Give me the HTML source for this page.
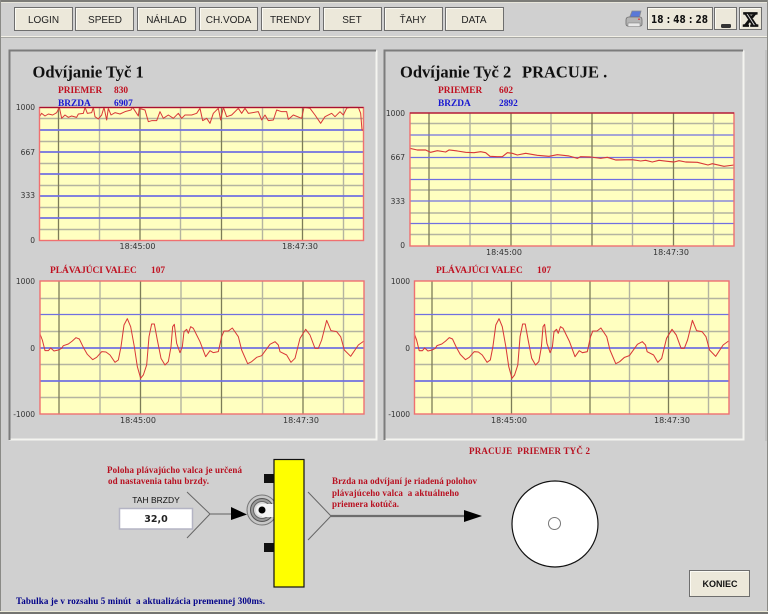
<!DOCTYPE html>
<html><head><meta charset="utf-8"><style>
html,body{margin:0;padding:0;background:#d0d0d0;width:768px;height:614px;overflow:hidden}
svg{display:block;filter:blur(.35px)}
text{white-space:pre}
.b{font:10px "Liberation Sans",sans-serif;fill:#222;text-anchor:middle}
.a{font:7.5px "DejaVu Sans",sans-serif;fill:#333;text-anchor:end}
.t{font:8px "DejaVu Sans",sans-serif;fill:#333;text-anchor:middle}
.h{font:bold 16.5px "Liberation Serif",serif;fill:#111}
.r{font:bold 9.4px "Liberation Serif",serif;fill:#c01020}
.u{font:bold 9.4px "Liberation Serif",serif;fill:#1818d0}
.n{font:bold 9px "Liberation Serif",serif;fill:#b81020}
.y{fill:#ffffc0}
.gl{stroke:#b4b4a0;stroke-width:1.400;fill:none}
.gd{stroke:#7c7c58;stroke-width:1.300;fill:none}
.bl{stroke:#7070e0;stroke-width:1.200;fill:none}
.bk{stroke:#7070e0;stroke-width:1.800;fill:none}
.tr{fill:none;stroke:#d83838;stroke-linejoin:round}
.fr{fill:none;stroke:#f07070;stroke-width:1.400}
.btn{fill:#ece8da;stroke:#6e6e6e;stroke-width:1}
.hi{fill:none;stroke:#fbfaf3;stroke-width:1}
</style></head><body>
<svg width="768" height="614" viewBox="0 0 768 614" xmlns="http://www.w3.org/2000/svg">
<rect width="768" height="614" fill="#d0d0d0"/>
<!-- window frame -->
<rect x="0" y="0" width="768" height="2" fill="#7c7c78"/>
<rect x="0" y="2" width="768" height="1" fill="#e8e6dc"/>
<rect x="0" y="36" width="768" height="1" fill="#f2f0e6"/>
<rect x="0" y="37" width="768" height="1" fill="#a8a8a4"/>
<rect x="0" y="0" width="1" height="614" fill="#8a8a86"/>
<rect x="767" y="0" width="1" height="614" fill="#8a8a86"/>
<rect x="0" y="611" width="768" height="1" fill="#ecead8"/>
<rect x="0" y="612" width="768" height="2" fill="#747470"/>

<!-- buttons -->
<g>
<rect class="btn" x="14.500" y="7.500" width="58" height="23"/><path class="hi" d="M15.500 29.500V8.500H71.500"/><text class="b" x="43.500" y="23">LOGIN</text>
<rect class="btn" x="75.500" y="7.500" width="58" height="23"/><path class="hi" d="M76.500 29.500V8.500H132.500"/><text class="b" x="105" y="23">SPEED</text>
<rect class="btn" x="137.500" y="7.500" width="58" height="23"/><path class="hi" d="M138.500 29.500V8.500H194.500"/><text class="b" x="166.500" y="23">NÁHLAD</text>
<rect class="btn" x="199.500" y="7.500" width="58" height="23"/><path class="hi" d="M200.500 29.500V8.500H256.500"/><text class="b" x="228.500" y="23">CH.VODA</text>
<rect class="btn" x="261.500" y="7.500" width="58" height="23"/><path class="hi" d="M262.500 29.500V8.500H318.500"/><text class="b" x="290.500" y="23">TRENDY</text>
<rect class="btn" x="323.500" y="7.500" width="58" height="23"/><path class="hi" d="M324.500 29.500V8.500H380.500"/><text class="b" x="352" y="23">SET</text>
<rect class="btn" x="384.500" y="7.500" width="58" height="23"/><path class="hi" d="M385.500 29.500V8.500H441.500"/><text class="b" x="413" y="23">ŤAHY</text>
<rect class="btn" x="445.500" y="7.500" width="58" height="23"/><path class="hi" d="M446.500 29.500V8.500H502.500"/><text class="b" x="474" y="23">DATA</text>
</g>

<!-- printer -->
<g>
<path d="M629 19 L632 11 H641 L639 19Z" fill="#5a78d8" stroke="#8a8a8a" stroke-width=".8"/>
<path d="M626 20 Q626 17 629 17 H640 Q642 17 642 20 V24 Q642 26 640 26 H628 Q626 26 626 24Z" fill="#b4b4b4" stroke="#6e6e6e" stroke-width=".8"/>
<rect x="628" y="23" width="12" height="3.500" fill="#e8e8e8" stroke="#777" stroke-width=".5"/>
<rect x="638" y="18.500" width="2" height="1.500" fill="#d85050"/>
</g>

<!-- clock, min, close -->
<rect class="btn" x="647.500" y="7.500" width="65" height="22"/><path class="hi" d="M648.500 28.500V8.500H711.500"/>
<text x="651" y="23" textLength="57" lengthAdjust="spacingAndGlyphs" style="font:bold 10.500px 'DejaVu Sans',sans-serif;fill:#111">18 : 48 : 28</text>
<rect class="btn" x="714.500" y="7.500" width="22" height="22"/><path class="hi" d="M715.500 28.500V8.500H735.500"/>
<rect x="721" y="24" width="10" height="4" rx="1.200" fill="#333"/>
<rect class="btn" x="739.500" y="7.500" width="22" height="22"/><path class="hi" d="M740.500 28.500V8.500H760.500"/>
<text x="750.500" y="26" text-anchor="middle" style="font:bold 20px 'Liberation Serif',serif;fill:#d8d8d8;stroke:#111;stroke-width:1.800px">X</text>

<!-- panels -->
<path d="M376.500 50.500V439.500H9.500" fill="none" stroke="#f4f4f0" stroke-width="2"/>
<path d="M9.500 440V50.500H376" fill="none" stroke="#7c7c7c" stroke-width="2"/>
<path d="M743.500 50.500V439.500H384.500" fill="none" stroke="#f4f4f0" stroke-width="2"/>
<path d="M384.500 440V50.500H743" fill="none" stroke="#7c7c7c" stroke-width="2"/>
<rect x="765.500" y="50" width="1" height="391" fill="#9c9c9c" opacity=".5"/>

<text class="h" x="32.500" y="77.500">Odvíjanie Tyč 1</text>
<text class="r" x="58" y="93">PRIEMER</text><text class="r" x="114" y="93">830</text>
<text class="u" x="58" y="106">BRZDA</text><text class="u" x="114" y="106">6907</text>
<text class="h" x="400" y="77.500">Odvíjanie Tyč 2</text><text class="h" x="522" y="77.500">PRACUJE .</text>
<text class="r" x="438" y="93">PRIEMER</text><text class="r" x="499" y="93">602</text>
<text class="u" x="438" y="106">BRZDA</text><text class="u" x="499" y="106">2892</text>

<!-- chart 1 top -->
<rect class="y" x="39.500" y="107.500" width="324" height="133"/>
<path class="gl" d="M40 118.500H364M40 141.500H364M40 163.500H364M40 185.500H364M40 207.500H364M40 229.500H364M99.500 107V240M180.500 107V240M262.500 107V240M343.500 107V240"/>
<path class="gd" d="M58.500 107V240M140 107V240M221.500 107V240M302.500 107V240"/>
<path class="bk" d="M40 130H364M40 152H364M40 174H364M40 196H364M40 218H364"/>
<polyline class="tr" transform="translate(0,100) scale(.33333)" style="stroke-width:3" points="118,50 125,40 135,48 145,42 158,45 170,38 178,22 185,55 195,45 205,52 215,48 230,52 235,42 250,40 255,22 262,40 275,38 280,22 285,50 295,57 305,45 312,22 320,60 325,25 333,45 345,38 360,42 375,35 393,30 398,22 415,48 418,25 435,30 445,65 455,62 470,62 480,35 490,55 505,45 520,55 535,40 545,55 555,45 575,45 590,40 600,25 608,62 620,55 630,70 640,40 655,25 662,60 670,22 680,50 695,45 715,25 725,40 735,25 745,40 775,35 785,60 795,45 805,62 820,60 830,30 845,35 860,35 865,58 880,45 905,55 912,22 930,25 945,45 962,70 975,50 995,40 1005,50 1020,35 1030,45 1040,25 1050,22 1075,22 1082,40 1086,90 1092,92"/>
<rect class="fr" x="39.500" y="107.500" width="324" height="133"/>
<path d="M39.500 107.500H363.500" stroke="#a81030" stroke-width="1.200" fill="none"/>
<text class="a" x="35" y="110">1000</text><text class="a" x="35" y="155">667</text><text class="a" x="35" y="198">333</text><text class="a" x="35" y="243">0</text>
<text class="t" x="137.500" y="249">18:45:00</text><text class="t" x="300" y="249">18:47:30</text>

<!-- chart 1 bottom -->
<text class="r" x="50" y="273">PLÁVAJÚCI VALEC</text><text class="r" x="151" y="273">107</text>
<rect class="y" x="40" y="281" width="324" height="133"/>
<path class="gl" d="M40 298.500H364M40 331.500H364M40 364.500H364M40 397.500H364M100 281V414M181 281V414M262.500 281V414M343.500 281V414"/>
<path class="gd" d="M59 281V414M140.500 281V414M221.500 281V414M303 281V414"/>
<path class="bl" d="M40 314.500H364"/><path class="bk" d="M40 348H364M40 381H364"/>
<polyline class="tr" transform="translate(0,260) scale(.33333)" style="stroke-width:3" points="120,222 127,240 135,272 145,272 152,264 162,273 175,270 185,265 190,257 205,252 217,243 228,233 238,237 250,262 262,283 278,299 290,292 305,275 318,276 330,285 345,307 355,300 363,260 372,195 382,176 392,200 403,260 412,320 422,355 430,345 440,315 447,230 455,192 463,192 472,240 483,295 495,315 505,305 513,260 518,200 523,193 530,250 540,278 547,260 552,215 560,208 565,220 572,200 580,205 590,225 600,245 617,290 630,272 640,278 655,275 665,230 672,213 685,213 697,204 715,230 725,270 743,311 755,305 770,292 785,287 810,253 825,245 835,255 840,275 860,285 873,307 885,295 900,235 917,208 930,225 945,265 955,265 965,240 980,181 993,212 1010,215 1022,230 1033,270 1052,289 1075,255 1092,243"/>
<rect class="fr" x="40" y="281" width="324" height="133"/>
<text class="a" x="35" y="284">1000</text><text class="a" x="35" y="351">0</text><text class="a" x="35" y="417">-1000</text>
<text class="t" x="138" y="423">18:45:00</text><text class="t" x="301" y="423">18:47:30</text>

<!-- chart 2 top -->
<rect class="y" x="410" y="113" width="324" height="133"/>
<path class="gl" d="M410 123.500H734M410 146H734M410 168H734M410 190H734M410 213H734M410 234.500H734M470 113V246M551 113V246M632.500 113V246M713.500 113V246"/>
<path class="gd" d="M429 113V246M511 113V246M592 113V246M673.500 113V246"/>
<path class="bl" d="M410 135H734M410 157.500H734M410 179.500H734M410 201H734M410 223.500H734"/>
<polyline class="tr" transform="translate(384,100) scale(.33333)" style="stroke-width:3.400" points="77,145 100,150 125,150 140,157 160,152 185,156 195,150 220,153 245,157 270,158 290,155 305,158 318,169 340,170 355,170 370,158 385,160 400,165 425,160 460,166 495,169 520,164 555,168 580,175 590,170 620,171 650,175 670,172 695,180 745,179 770,183 785,181 805,186 825,181 850,184 870,186 885,182 905,186 940,187 972,195 985,191 1020,199 1050,195"/>
<rect class="fr" x="410" y="113" width="324" height="133"/>
<path d="M410 113H734" stroke="#a81030" stroke-width="1.200" fill="none"/>
<text class="a" x="405" y="116">1000</text><text class="a" x="405" y="160">667</text><text class="a" x="405" y="204">333</text><text class="a" x="405" y="248">0</text>
<text class="t" x="504" y="255">18:45:00</text><text class="t" x="671" y="255">18:47:30</text>

<!-- chart 2 bottom -->
<text class="r" x="436" y="273">PLÁVAJÚCI VALEC</text><text class="r" x="537" y="273">107</text>
<rect class="y" x="414.500" y="281" width="314.500" height="133"/>
<path class="gl" d="M414 298.500H729M414 331.500H729M414 364.500H729M414 397.500H729M472 281V414M551 281V414M629.500 281V414M708.500 281V414"/>
<path class="gd" d="M432 281V414M511.500 281V414M590 281V414M668.500 281V414"/>
<path class="bl" d="M414 314.500H729"/><path class="bk" d="M414 348H729M414 381H729"/>
<polyline class="tr" transform="translate(384,260) scale(.33333) matrix(.97 0 0 1 -25.400 0)" style="stroke-width:3.200" points="120,222 127,240 135,272 145,272 152,264 162,273 175,270 185,265 190,257 205,252 217,243 228,233 238,237 250,262 262,283 278,299 290,292 305,275 318,276 330,285 345,307 355,300 363,260 372,195 382,176 392,200 403,260 412,320 422,355 430,345 440,315 447,230 455,192 463,192 472,240 483,295 495,315 505,305 513,260 518,200 523,193 530,250 540,278 547,260 552,215 560,208 565,220 572,200 580,205 590,225 600,245 617,290 630,272 640,278 655,275 665,230 672,213 685,213 697,204 715,230 725,270 743,311 755,305 770,292 785,287 810,253 825,245 835,255 840,275 860,285 873,307 885,295 900,235 917,208 930,225 945,265 955,265 965,240 980,181 993,212 1010,215 1022,230 1033,270 1052,289 1075,255 1092,243"/>
<rect class="fr" x="414.500" y="281" width="314.500" height="133"/>
<text class="a" x="410" y="284">1000</text><text class="a" x="410" y="351">0</text><text class="a" x="410" y="417">-1000</text>
<text class="t" x="509" y="423">18:45:00</text><text class="t" x="672" y="423">18:47:30</text>

<!-- bottom area -->
<text class="n" x="469" y="454" textLength="121">PRACUJE  PRIEMER TYČ 2</text>
<text class="n" x="107" y="473" textLength="135" lengthAdjust="spacing">Poloha plávajúcho valca je určená</text>
<text class="n" x="108" y="484" textLength="101" lengthAdjust="spacing">od nastavenia tahu brzdy.</text>
<text class="n" x="332" y="484" textLength="145" lengthAdjust="spacing">Brzda na odvíjaní je riadená polohov</text>
<text class="n" x="332" y="496" textLength="127" lengthAdjust="spacing">plávajúceho valca  a aktuálneho</text>
<text class="n" x="332" y="507" textLength="67" lengthAdjust="spacing">priemera kotúča.</text>
<text x="16" y="604" textLength="249" lengthAdjust="spacing" style="font:bold 9px 'Liberation Serif',serif;fill:#000088">Tabulka je v rozsahu 5 minút  a aktualizácia premennej 300ms.</text>

<text x="156" y="503" text-anchor="middle" style="font:8.500px 'Liberation Sans',sans-serif;fill:#111">TAH BRZDY</text>
<rect x="119.500" y="508.500" width="73" height="20.500" fill="#fff" stroke="#b4b4c4" stroke-width="1.500"/>
<text x="156" y="522" text-anchor="middle" style="font:bold 9.500px 'DejaVu Sans',sans-serif;fill:#222">32,0</text>

<path d="M187 492L210 514L187 538" fill="none" stroke="#666" stroke-width="1"/>
<path d="M210 514H232" stroke="#777" stroke-width="1.200"/>
<path d="M231 507L247 514.500L231 520Z" fill="#000"/>

<!-- roller and pillar -->
<circle cx="262" cy="510" r="15" fill="#c8c8c8" stroke="#777" stroke-width="1"/>
<circle cx="262" cy="510" r="11.500" fill="#9a9a9a" stroke="#555" stroke-width="1"/>
<circle cx="262" cy="510" r="8.500" fill="#dcdcdc" stroke="#666" stroke-width="1"/>
<rect x="262" y="504" width="13" height="13" fill="#f4f4f4"/>
<circle cx="262" cy="510" r="6" fill="#f4f4f4"/>
<circle cx="262" cy="510" r="3.500" fill="#000"/>
<rect x="264" y="474" width="10" height="9" fill="#111"/>
<rect x="264" y="543" width="10" height="9" fill="#111"/>
<rect x="274" y="459.500" width="30" height="127.500" fill="#ffff00" stroke="#111" stroke-width="1.200"/>

<path d="M308 492L331 516L308 540" fill="none" stroke="#666" stroke-width="1"/>
<path d="M331 516H465" stroke="#6c6c6c" stroke-width="2.200"/>
<path d="M464 510L482 516L464 522Z" fill="#000"/>

<circle cx="555" cy="524" r="43" fill="#fff" stroke="#111" stroke-width="1.200"/>
<circle cx="554.500" cy="523.500" r="6" fill="#fff" stroke="#777" stroke-width="1"/>

<rect class="btn" x="689.500" y="570.500" width="60" height="26"/><path class="hi" d="M690.500 595.500V571.500H748.500"/>
<text x="720" y="587" text-anchor="middle" style="font:bold 9px 'Liberation Sans',sans-serif;fill:#111">KONIEC</text>
</svg>
</body></html>
